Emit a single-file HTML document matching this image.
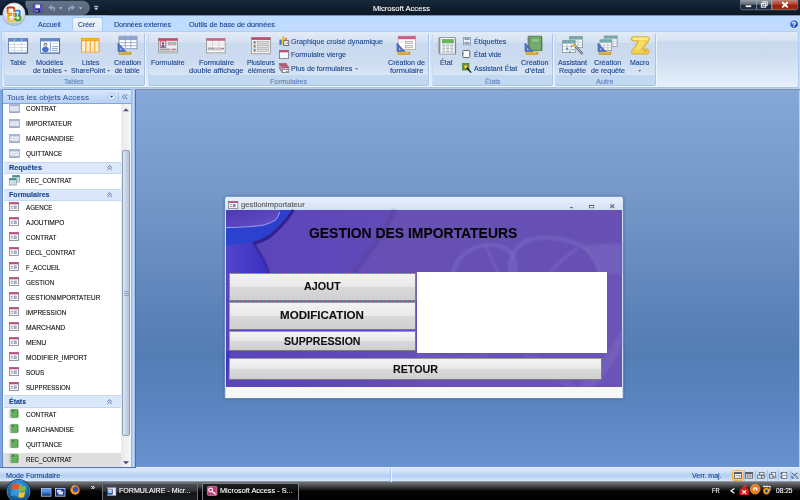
<!DOCTYPE html>
<html><head><meta charset="utf-8"><title>Microsoft Access</title>
<style>
*{margin:0;padding:0;box-sizing:border-box}
html,body{width:800px;height:500px;overflow:hidden;background:#bfdbff;font-family:"Liberation Sans",sans-serif}
.a{position:absolute}
.t{position:absolute;white-space:nowrap;transform-origin:0 50%;display:block;-webkit-text-stroke:0.1px}
svg{position:absolute;overflow:visible}
/* title */
#title{left:0;top:0;width:800px;height:15px;background:linear-gradient(#17293c 0,#11202f 45%,#0c1825 100%)}
#tline{left:0;top:15px;width:800px;height:1px;background:#7f93b0}
#tabs{left:0;top:16px;width:800px;height:16px;background:#bfdbff}
#qat{left:22px;top:1px;width:67px;height:13px;border-radius:0 7px 7px 0;background:linear-gradient(#5d6a80,#47546b)}
#orb{left:3px;top:2px;width:23px;height:23px;border-radius:50%;background:radial-gradient(circle at 50% 35%,#ffffff 0,#f1f3f7 45%,#c9cfdb 80%,#aab2c2 100%);box-shadow:0 0 0 1px rgba(150,160,180,.7),0 1px 2px rgba(0,0,0,.4)}
#tabact{left:72px;top:16.6px;width:30.5px;height:15.4px;border:1px solid #accbf2;border-bottom:none;border-radius:3px 3px 0 0;background:linear-gradient(#eff5fe,#e6eefa 60%,#e0e9f6)}
/* ribbon */
#ribbon{left:1px;top:31px;width:798px;height:57px;border-radius:3px;border:1px solid #b3cef2;border-bottom-color:#a9c4e8;background:linear-gradient(#e1ebf8 0,#d7e3f3 15%,#c9d9ee 17%,#cedcf0 45%,#dae7f6 75%,#e6f1fc 100%)}
.grp{position:absolute;top:33px;height:53px;border:1px solid;border-color:#e3ecf8 #a9c3e6 #a6c1e4 #c9d9ee;border-radius:2px;box-shadow:1px 1px 0 rgba(240,247,255,.9);background:linear-gradient(#dfe9f6 0,#d6e2f3 16%,#c9d9ee 18%,#cedcf0 55%,#d8e5f5 81%,#c2d8f1 81%,#c1d9f2 100%)}
/* gap under ribbon */
#gap{left:0;top:88px;width:800px;height:2px;background:linear-gradient(#c9dcf6,#9db2d2)}
#wstop{left:135px;top:89px;width:665px;height:1px;background:#7b8ca6}
#navtop{left:2.4px;top:89px;width:129px;height:0.9px;background:#6d98d8}
/* nav */
#navl{left:0;top:89.5px;width:3px;height:378.5px;background:linear-gradient(90deg,#84a7da 0,#84a7da 72%,#5f8acb 74%,#5f8acb 100%)}
#navhead{left:3px;top:89.6px;width:128px;height:14.7px;background:linear-gradient(#dce9fb 0,#c9ddf9 45%,#b7d0f4 100%);border-bottom:1px solid #7ea6e2}
#navbody{left:3px;top:104px;width:118px;height:364px;background:#fff}
#navsb{left:121px;top:104px;width:10px;height:364px;background:linear-gradient(90deg,#e9e9e9,#f6f6f6)}
#navthumb{left:122px;top:150px;width:8px;height:286px;border:1px solid #8c9db8;border-radius:2px;background:linear-gradient(90deg,#dfe7f3 0,#c6d3e7 50%,#b4c4de 100%)}
#navr{left:131px;top:90px;width:5px;height:378px;background:linear-gradient(90deg,#8fb3e6 0,#c4daf7 50%,#8fb3e6 80%,#5e6e86 81%,#5e6e86 100%)}
.nh{position:absolute;left:4px;width:117px;height:12px;background:#dbe8fb;border-top:1px solid #c4d8f3;border-bottom:1px solid #c4d8f3}
#navsel{left:3px;top:453px;width:118px;height:14.5px;background:#dedede}
/* workspace */
#ws{left:136px;top:90px;width:664px;height:378px;background:linear-gradient(#86a8d8 0,#7497c8 29%,#6388bd 50%,#537db4 70.5%,#5c86c2 85%,#6993cf 100%)}
#wsr{left:798.6px;top:90px;width:1.4px;height:378px;background:#b9d0f0}
/* dialog */
#dlg{left:224px;top:195.8px;width:399.5px;height:203.2px;border:1px solid #6487b8;border-top-color:#7a9ccc;border-radius:3px 3px 0 0;background:linear-gradient(#e9f0fb 0,#d6e3f6 12px,#cfdef4 13px,#cfdef4 100%);box-shadow:0 0 2px rgba(40,60,100,.5)}
#dlgc{left:226px;top:210px;width:396px;height:177px;background:#6450b6;overflow:hidden}
#dlgb{left:226px;top:387px;width:396px;height:11px;background:#f7f7f7}
.btn{position:absolute;border:1px solid #7b7b7b;border-top-color:#9a9a9a;border-left-color:#9a9a9a;border-radius:1px;background:linear-gradient(#f3f3f3 0,#e9e9e9 48%,#dadada 50%,#cfcfcf 100%)}
#wbox{left:417px;top:272px;width:190px;height:81px;background:#fff}
/* status */
#status{left:0;top:468px;width:800px;height:14px;background:linear-gradient(#c4d8f4 0,#dfeafa 8%,#d3e3f9 22%,#bcd5f5 48%,#b4cef3 62%,#c8dcf7 80%,#d6e5f9 100%);border-bottom:1px solid #8d97a6}
#stl{left:0;top:467.4px;width:135px;height:1px;background:#4f78bc}
#wsb{left:136px;top:466.6px;width:664px;height:1.2px;background:#e9f1fc}
/* taskbar */
#task{left:0;top:482px;width:800px;height:18px;background:linear-gradient(#737577 0,#5b5d60 12%,#3f4144 25%,#1d1e20 40%,#060606 50%,#000 100%)}
#stsep{left:390px;top:469px;width:2px;height:12.5px;background:linear-gradient(90deg,#a9c3e8 0,#a9c3e8 50%,#f0f6fd 50%,#f0f6fd 100%)}
.tb{position:absolute;top:483.4px;height:17px;border-radius:2px 2px 0 0;border:1px solid #6a6f77;border-bottom:none;background:linear-gradient(#4a4d53 0,#303236 45%,#131415 52%,#1b1c1e 100%)}

.tb2{background:linear-gradient(#202124 0,#0b0b0c 45%,#000 55%,#0d0d0f 100%);border-color:#787d86}

</style></head><body>
<div class="a" id="title"></div>
<div class="a" id="tline"></div>
<div class="a" id="tabs"></div>
<div class="a" id="tabact"></div>
<div class="a" id="ribbon"></div>
<div class="grp" style="left:4px;width:141px"></div>
<div class="grp" style="left:148px;width:281px"></div>
<div class="grp" style="left:432px;width:121px"></div>
<div class="grp" style="left:555px;width:101px"></div>
<svg style="left:8px;top:38px" width="20" height="16" viewBox="0 0 20 16" ><rect x="0.5" y="0.5" width="19" height="14.5" fill="#ffffff" stroke="#6f8cc2" stroke-width="1"/><rect x="1" y="1" width="18" height="2.6" fill="#6487c6"/><line x1="1" y1="6.5" x2="19" y2="6.5" stroke="#c5d0e4" stroke-width="0.8"/><line x1="1" y1="9.5" x2="19" y2="9.5" stroke="#c5d0e4" stroke-width="0.8"/><line x1="1" y1="12.5" x2="19" y2="12.5" stroke="#c5d0e4" stroke-width="0.8"/><line x1="6.5" y1="1" x2="6.5" y2="15" stroke="#c5d0e4" stroke-width="0.8"/><line x1="13.5" y1="1" x2="13.5" y2="15" stroke="#c5d0e4" stroke-width="0.8"/><line x1="19.6" y1="1" x2="19.6" y2="15.2" stroke="#4f6796" stroke-width="0.8"/><line x1="1" y1="15.2" x2="19.6" y2="15.2" stroke="#4f6796" stroke-width="0.8"/></svg>
<svg style="left:40px;top:38px" width="20" height="16" viewBox="0 0 20 16" ><rect x="0.5" y="0.5" width="19" height="14.5" fill="#ffffff" stroke="#6f8cc2" stroke-width="1"/><rect x="1" y="1" width="18" height="2.4" fill="#6487c6"/><ellipse cx="5.4" cy="11.4" rx="3.3" ry="2.7" fill="#4a72c4"/><circle cx="5.4" cy="6.8" r="2" fill="#7c7c7c"/><circle cx="5.4" cy="7.2" r="1.1" fill="#d9d9d9"/><line x1="10.4" y1="4.2" x2="10.4" y2="13.6" stroke="#5e7fbd" stroke-width="0.8"/><rect x="12" y="4.8" width="6" height="1.6" fill="#e3e8f2"/><line x1="12" y1="8.6" x2="18" y2="8.6" stroke="#6f8cc2" stroke-width="0.8"/><line x1="12" y1="10.6" x2="18" y2="10.6" stroke="#6f8cc2" stroke-width="0.8"/><line x1="12" y1="12.6" x2="18" y2="12.6" stroke="#6f8cc2" stroke-width="0.8"/><line x1="19.6" y1="1" x2="19.6" y2="15.2" stroke="#4f6796" stroke-width="0.8"/><line x1="1" y1="15.2" x2="19.6" y2="15.2" stroke="#4f6796" stroke-width="0.8"/></svg>
<svg style="left:81px;top:38px" width="19" height="15" viewBox="0 0 19 15" ><rect x="0.4" y="0.4" width="17.6" height="13.6" fill="#fbd596" stroke="#f39a14" stroke-width="0.9"/><rect x="0.4" y="0.4" width="17.6" height="2.6" fill="#f6a21c"/><line x1="0.6" y1="1.5" x2="17.8" y2="1.5" stroke="#fbc566" stroke-width="0.6"/><line x1="2.6" y1="3.2" x2="2.6" y2="13.6" stroke="#fef0d4" stroke-width="2.7"/><line x1="7" y1="3.2" x2="7" y2="13.6" stroke="#fef0d4" stroke-width="2.7"/><line x1="11.5" y1="3.2" x2="11.5" y2="13.6" stroke="#fef0d4" stroke-width="2.7"/><line x1="15.9" y1="3.2" x2="15.9" y2="13.6" stroke="#fef0d4" stroke-width="2.7"/><line x1="4.8" y1="3" x2="4.8" y2="14" stroke="#f6a830" stroke-width="1"/><line x1="9.25" y1="3" x2="9.25" y2="14" stroke="#f6a830" stroke-width="1"/><line x1="13.7" y1="3" x2="13.7" y2="14" stroke="#f6a830" stroke-width="1"/></svg>
<svg style="left:117px;top:35px" width="22" height="21" viewBox="0 0 22 21" ><rect x="2" y="1.2" width="18" height="12.6" fill="#ffffff" stroke="#6e86b3" stroke-width="0.8"/><rect x="2" y="1.2" width="18" height="3.4" fill="#8ea6cf"/><line x1="2" y1="7.666666666666666" x2="20" y2="7.666666666666666" stroke="#7c93bd" stroke-width="0.7"/><line x1="2" y1="10.733333333333333" x2="20" y2="10.733333333333333" stroke="#7c93bd" stroke-width="0.7"/><line x1="2" y1="4.6" x2="20" y2="4.6" stroke="#7c93bd" stroke-width="0.7"/><line x1="8.3" y1="1.2" x2="8.3" y2="13.799999999999999" stroke="#7c93bd" stroke-width="0.7"/><line x1="13.88" y1="1.2" x2="13.88" y2="13.799999999999999" stroke="#7c93bd" stroke-width="0.7"/><path d="M1 8 L9 16.5 L1 16.5 Z" fill="#4d72cc" stroke="#3558b5" stroke-width="0.6" /><path d="M2.8 12.5 L5 15 L2.8 15 Z" fill="#a9c0ee" /><rect x="2" y="17" width="12" height="2.6" fill="#d9aa2c" stroke="#b98b14" stroke-width="0.5"/><line x1="3.5" y1="17.2" x2="3.5" y2="18.4" stroke="#f7e29a" stroke-width="0.6"/><line x1="5.5" y1="17.2" x2="5.5" y2="18.4" stroke="#f7e29a" stroke-width="0.6"/><line x1="7.5" y1="17.2" x2="7.5" y2="18.4" stroke="#f7e29a" stroke-width="0.6"/><line x1="9.5" y1="17.2" x2="9.5" y2="18.4" stroke="#f7e29a" stroke-width="0.6"/><line x1="11.5" y1="17.2" x2="11.5" y2="18.4" stroke="#f7e29a" stroke-width="0.6"/></svg>
<svg style="left:158px;top:38px" width="20" height="15.5" viewBox="0 0 20 15.5" ><rect x="0.5" y="0.5" width="19" height="14.3" fill="#eeeeee" stroke="#9a9a9a" stroke-width="0.9"/><rect x="0.5" y="0.5" width="19" height="2.3" fill="#c4456e"/><rect x="2.2" y="3" width="5.6" height="6.4" fill="#f6f6f6" stroke="#c4456e" stroke-width="0.9"/><circle cx="5" cy="5.4" r="1.2" fill="#555"/><ellipse cx="5" cy="8" rx="1.8" ry="1.3" fill="#3f6fd0"/><rect x="10" y="4.2" width="8" height="2.8" fill="#bdbdbd" stroke="#8c8c8c" stroke-width="0.5"/><rect x="1" y="10.2" width="18" height="4" fill="#d6d6d6"/><line x1="2" y1="11.3" x2="12" y2="11.3" stroke="#777" stroke-width="0.8"/><line x1="14" y1="11.3" x2="18" y2="11.3" stroke="#c4456e" stroke-width="0.8"/><line x1="2" y1="13.2" x2="17" y2="13.2" stroke="#9c9c9c" stroke-width="0.7"/></svg>
<svg style="left:206px;top:38px" width="20" height="15.5" viewBox="0 0 20 15.5" ><rect x="0.5" y="0.5" width="18.6" height="14.3" fill="#ffffff" stroke="#9a9a9a" stroke-width="0.9"/><rect x="0.5" y="0.5" width="18.6" height="2.3" fill="#cf5f84"/><line x1="1" y1="5" x2="19" y2="5" stroke="#c9c9c9" stroke-width="0.7"/><line x1="1" y1="7.2" x2="19" y2="7.2" stroke="#c9c9c9" stroke-width="0.7"/><line x1="6.5" y1="3" x2="6.5" y2="9.2" stroke="#c9c9c9" stroke-width="0.7"/><line x1="12.8" y1="3" x2="12.8" y2="9.2" stroke="#c9c9c9" stroke-width="0.7"/><rect x="1" y="9.2" width="17.8" height="3.4" fill="#dcdcdc"/><line x1="2" y1="10.2" x2="9" y2="10.2" stroke="#777" stroke-width="0.8"/><line x1="10.5" y1="10.2" x2="15" y2="10.2" stroke="#999" stroke-width="0.7"/><line x1="15.5" y1="10.4" x2="18" y2="10.4" stroke="#c4456e" stroke-width="0.9"/><line x1="2" y1="11.8" x2="17" y2="11.8" stroke="#a8a8a8" stroke-width="0.6"/></svg>
<svg style="left:251px;top:36.5px" width="20" height="17.5" viewBox="0 0 20 17.5" ><rect x="0.5" y="0.5" width="19" height="16.2" fill="#f4f4f4" stroke="#9a9a9a" stroke-width="0.9"/><rect x="0.5" y="0.5" width="19" height="2.4" fill="#c4456e"/><circle cx="3.6" cy="5.2" r="1.1" fill="#4b6fb3"/><rect x="2.6" y="5.8" width="2" height="1.2" fill="#e0a030"/><rect x="6.6" y="4.2" width="11" height="2.2" fill="#e2e2e2" stroke="#8f8f8f" stroke-width="0.5"/><line x1="1" y1="7.300000000000001" x2="19" y2="7.300000000000001" stroke="#c4c4c4" stroke-width="0.6"/><circle cx="3.6" cy="9.2" r="1.1" fill="#4b6fb3"/><rect x="2.6" y="9.799999999999999" width="2" height="1.2" fill="#e0a030"/><rect x="6.6" y="8.2" width="11" height="2.2" fill="#e2e2e2" stroke="#8f8f8f" stroke-width="0.5"/><line x1="1" y1="11.299999999999999" x2="19" y2="11.299999999999999" stroke="#c4c4c4" stroke-width="0.6"/><circle cx="3.6" cy="13.2" r="1.1" fill="#4b6fb3"/><rect x="2.6" y="13.799999999999999" width="2" height="1.2" fill="#e0a030"/><rect x="6.6" y="12.2" width="11" height="2.2" fill="#e2e2e2" stroke="#8f8f8f" stroke-width="0.5"/></svg>
<svg style="left:278.6px;top:35.8px" width="10.4" height="10" viewBox="0 0 10.4 10" ><rect x="0.4" y="3.6" width="2.2" height="5.2" fill="#3b74c4"/><rect x="3" y="0.4" width="2.4" height="8.4" fill="#f3bf2e"/><rect x="5.8" y="2" width="2" height="3.4" fill="#e8742a"/><rect x="4.8" y="4.8" width="5" height="4.8" fill="#ffffff" stroke="#4a4f5a" stroke-width="0.8"/><line x1="6" y1="7.6" x2="8.6" y2="7.6" stroke="#7b8290" stroke-width="0.7"/><line x1="8.6" y1="6" x2="8.6" y2="7.6" stroke="#7b8290" stroke-width="0.7"/></svg>
<svg style="left:279px;top:49.8px" width="10" height="9" viewBox="0 0 10 9" ><rect x="0.4" y="0.4" width="9" height="8.2" fill="#f4f7fd" stroke="#6e7684" stroke-width="0.8"/><rect x="0.4" y="0.4" width="9" height="1.9" fill="#c7486f"/></svg>
<svg style="left:279px;top:63px" width="10.4" height="10.4" viewBox="0 0 10.4 10.4" ><rect x="0.4" y="0.4" width="7" height="5.6" fill="#eef1f7" stroke="#767d8a" stroke-width="0.7"/><rect x="0.4" y="0.4" width="7" height="1.6" fill="#c7486f"/><rect x="1.6" y="2.1" width="7" height="5.6" fill="#eef1f7" stroke="#767d8a" stroke-width="0.7"/><rect x="1.6" y="2.1" width="7" height="1.6" fill="#c7486f"/><rect x="2.8" y="3.8" width="7" height="5.6" fill="#eef1f7" stroke="#767d8a" stroke-width="0.7"/><rect x="2.8" y="3.8" width="7" height="1.6" fill="#c7486f"/><rect x="3.4" y="6.6" width="5.6" height="3" fill="#ffffff" stroke="#555c68" stroke-width="0.6"/><path d="M6.6 8 l1.8 0 l-0.9 1.1 Z" fill="#333" /></svg>
<svg style="left:396px;top:35px" width="22" height="21" viewBox="0 0 22 21" ><rect x="2.2" y="1.2" width="17.4" height="13.4" fill="#ffffff" stroke="#a8a8a8" stroke-width="0.8"/><rect x="2.2" y="1.2" width="17.4" height="3" fill="#d25a80"/><rect x="9.6" y="6.4" width="7" height="2.2" fill="#ececec" stroke="#9a9a9a" stroke-width="0.6"/><rect x="9.6" y="10.4" width="7" height="2.4" fill="#ececec" stroke="#9a9a9a" stroke-width="0.6"/><line x1="4" y1="7" x2="8" y2="7" stroke="#cfcfcf" stroke-width="0.7"/><path d="M1 8 L9 16.5 L1 16.5 Z" fill="#4d72cc" stroke="#3558b5" stroke-width="0.6" /><path d="M2.8 12.5 L5 15 L2.8 15 Z" fill="#a9c0ee" /><rect x="2" y="17" width="12" height="2.6" fill="#d9aa2c" stroke="#b98b14" stroke-width="0.5"/><line x1="3.5" y1="17.2" x2="3.5" y2="18.4" stroke="#f7e29a" stroke-width="0.6"/><line x1="5.5" y1="17.2" x2="5.5" y2="18.4" stroke="#f7e29a" stroke-width="0.6"/><line x1="7.5" y1="17.2" x2="7.5" y2="18.4" stroke="#f7e29a" stroke-width="0.6"/><line x1="9.5" y1="17.2" x2="9.5" y2="18.4" stroke="#f7e29a" stroke-width="0.6"/><line x1="11.5" y1="17.2" x2="11.5" y2="18.4" stroke="#f7e29a" stroke-width="0.6"/></svg>
<svg style="left:437.5px;top:37px" width="18.5" height="18" viewBox="0 0 18.5 18" ><rect x="1.6" y="0.5" width="15.6" height="16.6" fill="#fbfbfb" stroke="#8b939d" stroke-width="0.9"/><line x1="17.6" y1="1.2" x2="17.6" y2="17.3" stroke="#6f7780" stroke-width="0.7"/><rect x="4.2" y="2.4" width="11.4" height="3.6" fill="#6fb55c" stroke="#4f9a42" stroke-width="0.5"/><rect x="4.3" y="7.4" width="3" height="2.1" fill="#b4bdc8"/><rect x="8.3" y="7.4" width="3" height="2.1" fill="#b4bdc8"/><rect x="12.3" y="7.4" width="3" height="2.1" fill="#b4bdc8"/><rect x="4.3" y="10.5" width="3" height="2.1" fill="#b4bdc8"/><rect x="8.3" y="10.5" width="3" height="2.1" fill="#b4bdc8"/><rect x="12.3" y="10.5" width="3" height="2.1" fill="#b4bdc8"/><rect x="4.3" y="13.600000000000001" width="3" height="2.1" fill="#b4bdc8"/><rect x="8.3" y="13.600000000000001" width="3" height="2.1" fill="#b4bdc8"/><rect x="12.3" y="13.600000000000001" width="3" height="2.1" fill="#b4bdc8"/><ellipse cx="1.4" cy="2.0" rx="1.3" ry="0.7" fill="none" stroke="#777" stroke-width="0.5"/><ellipse cx="1.4" cy="4.2" rx="1.3" ry="0.7" fill="none" stroke="#777" stroke-width="0.5"/><ellipse cx="1.4" cy="6.4" rx="1.3" ry="0.7" fill="none" stroke="#777" stroke-width="0.5"/><ellipse cx="1.4" cy="8.600000000000001" rx="1.3" ry="0.7" fill="none" stroke="#777" stroke-width="0.5"/><ellipse cx="1.4" cy="10.8" rx="1.3" ry="0.7" fill="none" stroke="#777" stroke-width="0.5"/><ellipse cx="1.4" cy="13.0" rx="1.3" ry="0.7" fill="none" stroke="#777" stroke-width="0.5"/><ellipse cx="1.4" cy="15.200000000000001" rx="1.3" ry="0.7" fill="none" stroke="#777" stroke-width="0.5"/></svg>
<svg style="left:462.9px;top:36.6px" width="8" height="8.4" viewBox="0 0 8 8.4" ><rect x="0.6" y="0.4" width="6.8" height="7.4" fill="#fdfdfd" stroke="#7f8793" stroke-width="0.7"/><rect x="1.4" y="1.2" width="5.2" height="1.6" fill="#7189b8"/><rect x="1.4" y="3.4" width="5.2" height="1.2" fill="#dde2ea"/><rect x="1.4" y="5.2" width="5.2" height="1.6" fill="#7189b8"/></svg>
<svg style="left:462px;top:50.2px" width="8.6" height="8.2" viewBox="0 0 8.6 8.2" ><rect x="0.8" y="0.5" width="7" height="7" fill="#f9fbff" stroke="#4f545c" stroke-width="0.9" rx="1"/><line x1="0.4" y1="3.6" x2="1.6" y2="3.6" stroke="#4f545c" stroke-width="0.8"/></svg>
<svg style="left:462.2px;top:62.8px" width="10" height="10.4" viewBox="0 0 10 10.4" ><rect x="0.4" y="0.4" width="6.6" height="6.6" fill="#58a04a" stroke="#3f7d36" stroke-width="0.7"/><rect x="2" y="2" width="3.4" height="3.4" fill="#e8d23c" stroke="#8a7a10" stroke-width="0.6"/><line x1="4.8" y1="4.8" x2="9.2" y2="9.6" stroke="#111" stroke-width="1.3"/></svg>
<svg style="left:524px;top:35px" width="20" height="21" viewBox="0 0 20 21" ><rect x="4.8" y="1.2" width="12.8" height="14.2" fill="#74ab6e" stroke="#4d7f4a" stroke-width="0.9"/><rect x="7.2" y="3.2" width="8.4" height="4.4" fill="#8fc487" stroke="#5b9455" stroke-width="0.6"/><line x1="17.9" y1="2" x2="17.9" y2="15.6" stroke="#3f6a3c" stroke-width="0.7"/><ellipse cx="4.4" cy="2.6" rx="1.2" ry="0.6" fill="none" stroke="#666" stroke-width="0.5"/><ellipse cx="4.4" cy="4.800000000000001" rx="1.2" ry="0.6" fill="none" stroke="#666" stroke-width="0.5"/><ellipse cx="4.4" cy="7.0" rx="1.2" ry="0.6" fill="none" stroke="#666" stroke-width="0.5"/><ellipse cx="4.4" cy="9.200000000000001" rx="1.2" ry="0.6" fill="none" stroke="#666" stroke-width="0.5"/><ellipse cx="4.4" cy="11.4" rx="1.2" ry="0.6" fill="none" stroke="#666" stroke-width="0.5"/><ellipse cx="4.4" cy="13.6" rx="1.2" ry="0.6" fill="none" stroke="#666" stroke-width="0.5"/><path d="M1 8 L9 16.5 L1 16.5 Z" fill="#4d72cc" stroke="#3558b5" stroke-width="0.6" /><path d="M2.8 12.5 L5 15 L2.8 15 Z" fill="#a9c0ee" /><rect x="2" y="17" width="12" height="2.6" fill="#d9aa2c" stroke="#b98b14" stroke-width="0.5"/><line x1="3.5" y1="17.2" x2="3.5" y2="18.4" stroke="#f7e29a" stroke-width="0.6"/><line x1="5.5" y1="17.2" x2="5.5" y2="18.4" stroke="#f7e29a" stroke-width="0.6"/><line x1="7.5" y1="17.2" x2="7.5" y2="18.4" stroke="#f7e29a" stroke-width="0.6"/><line x1="9.5" y1="17.2" x2="9.5" y2="18.4" stroke="#f7e29a" stroke-width="0.6"/><line x1="11.5" y1="17.2" x2="11.5" y2="18.4" stroke="#f7e29a" stroke-width="0.6"/></svg>
<svg style="left:561.5px;top:35.5px" width="22" height="20" viewBox="0 0 22 20" ><rect x="7.4" y="0.6" width="13" height="11" fill="#ffffff" stroke="#7f95a3" stroke-width="0.8"/><rect x="7.4" y="0.6" width="13" height="2.8" fill="#6aa7a8"/><line x1="7.4" y1="6.133333333333333" x2="20.4" y2="6.133333333333333" stroke="#a9b9c6" stroke-width="0.7"/><line x1="7.4" y1="8.866666666666665" x2="20.4" y2="8.866666666666665" stroke="#a9b9c6" stroke-width="0.7"/><line x1="7.4" y1="3.4" x2="20.4" y2="3.4" stroke="#a9b9c6" stroke-width="0.7"/><line x1="11.82" y1="0.6" x2="11.82" y2="11.6" stroke="#a9b9c6" stroke-width="0.7"/><line x1="16.11" y1="0.6" x2="16.11" y2="11.6" stroke="#a9b9c6" stroke-width="0.7"/><rect x="0.6" y="4.6" width="12.6" height="12" fill="#ffffff" stroke="#7f95a3" stroke-width="0.8"/><rect x="0.6" y="4.6" width="12.6" height="2.8" fill="#6aa7a8"/><line x1="0.6" y1="10.466666666666665" x2="13.2" y2="10.466666666666665" stroke="#a9b9c6" stroke-width="0.7"/><line x1="0.6" y1="13.533333333333331" x2="13.2" y2="13.533333333333331" stroke="#a9b9c6" stroke-width="0.7"/><line x1="0.6" y1="7.3999999999999995" x2="13.2" y2="7.3999999999999995" stroke="#a9b9c6" stroke-width="0.7"/><line x1="4.8839999999999995" y1="4.6" x2="4.8839999999999995" y2="16.6" stroke="#a9b9c6" stroke-width="0.7"/><line x1="9.042" y1="4.6" x2="9.042" y2="16.6" stroke="#a9b9c6" stroke-width="0.7"/><path d="M5.2 11.1 L5.725 12.075 L6.7 12.6 L5.725 13.125 L5.2 14.1 L4.675000000000001 13.125 L3.7 12.6 L4.675000000000001 12.075 Z" fill="#4b7be0" /><path d="M9.6 9.0 L10.02 9.78 L10.799999999999999 10.2 L10.02 10.62 L9.6 11.399999999999999 L9.18 10.62 L8.4 10.2 L9.18 9.78 Z" fill="#4b7be0" /><path d="M7.6 14.5 L7.984999999999999 15.215 L8.7 15.6 L7.984999999999999 15.985 L7.6 16.7 L7.215 15.985 L6.5 15.6 L7.215 15.215 Z" fill="#4b7be0" /><path d="M11.2 13.1 L11.514999999999999 13.685 L12.1 14 L11.514999999999999 14.315 L11.2 14.9 L10.885 14.315 L10.299999999999999 14 L10.885 13.685 Z" fill="#4b7be0" /><line x1="11.6" y1="8.6" x2="20.6" y2="18" stroke="#4a4a4a" stroke-width="2.2"/><line x1="11.6" y1="8.6" x2="20.4" y2="17.8" stroke="#e9e9e9" stroke-width="1"/><line x1="11.2" y1="8.2" x2="13.4" y2="10.5" stroke="#e7b428" stroke-width="2.2"/></svg>
<svg style="left:597px;top:35px" width="22" height="21" viewBox="0 0 22 21" ><rect x="7.2" y="1" width="13" height="10.4" fill="#ffffff" stroke="#7f95a3" stroke-width="0.8"/><rect x="7.2" y="1" width="13" height="2.8" fill="#6aa7a8"/><line x1="7.2" y1="6.333333333333334" x2="20.2" y2="6.333333333333334" stroke="#a9b9c6" stroke-width="0.7"/><line x1="7.2" y1="8.866666666666667" x2="20.2" y2="8.866666666666667" stroke="#a9b9c6" stroke-width="0.7"/><line x1="7.2" y1="3.8" x2="20.2" y2="3.8" stroke="#a9b9c6" stroke-width="0.7"/><line x1="11.620000000000001" y1="1" x2="11.620000000000001" y2="11.4" stroke="#a9b9c6" stroke-width="0.7"/><line x1="15.91" y1="1" x2="15.91" y2="11.4" stroke="#a9b9c6" stroke-width="0.7"/><rect x="3" y="4.8" width="11.6" height="10.6" fill="#ffffff" stroke="#7f95a3" stroke-width="0.8"/><rect x="3" y="4.8" width="11.6" height="2.8" fill="#6aa7a8"/><line x1="3" y1="10.2" x2="14.6" y2="10.2" stroke="#a9b9c6" stroke-width="0.7"/><line x1="3" y1="12.8" x2="14.6" y2="12.8" stroke="#a9b9c6" stroke-width="0.7"/><line x1="3" y1="7.6" x2="14.6" y2="7.6" stroke="#a9b9c6" stroke-width="0.7"/><line x1="6.944" y1="4.8" x2="6.944" y2="15.399999999999999" stroke="#a9b9c6" stroke-width="0.7"/><line x1="10.772" y1="4.8" x2="10.772" y2="15.399999999999999" stroke="#a9b9c6" stroke-width="0.7"/><path d="M1 8 L9 16.5 L1 16.5 Z" fill="#4d72cc" stroke="#3558b5" stroke-width="0.6" /><path d="M2.8 12.5 L5 15 L2.8 15 Z" fill="#a9c0ee" /><rect x="2" y="17" width="12" height="2.6" fill="#d9aa2c" stroke="#b98b14" stroke-width="0.5"/><line x1="3.5" y1="17.2" x2="3.5" y2="18.4" stroke="#f7e29a" stroke-width="0.6"/><line x1="5.5" y1="17.2" x2="5.5" y2="18.4" stroke="#f7e29a" stroke-width="0.6"/><line x1="7.5" y1="17.2" x2="7.5" y2="18.4" stroke="#f7e29a" stroke-width="0.6"/><line x1="9.5" y1="17.2" x2="9.5" y2="18.4" stroke="#f7e29a" stroke-width="0.6"/><line x1="11.5" y1="17.2" x2="11.5" y2="18.4" stroke="#f7e29a" stroke-width="0.6"/></svg>
<svg style="left:629.5px;top:35.6px" width="21" height="19" viewBox="0 0 21 19" ><path d="M3.2 0.8 L16.6 0.8 C20 0.8 20.2 4 18.2 5.2 C16.2 8.4 14.2 10.8 12.4 13.2 L17 13.2 C19.8 13.2 20 17.8 16.8 18 L4 18 C0.6 18 0.6 14.8 2.6 13.6 C5 11 6.8 8.2 7.8 5 L3.2 5 C0.4 5 0.4 0.8 3.2 0.8 Z" fill="#f2d04c" stroke="#c7a028" stroke-width="0.8" /><path d="M4 1.6 L16.2 1.6 C18 1.8 18.2 3.2 17.4 3.9 L4 3.9 C2.4 3.7 2.4 1.8 4 1.6 Z" fill="#fbeb96" /><path d="M9 5.2 C8.2 8.6 6.4 11.4 4 13.8 L9.4 14 C11.6 11.4 13.4 8.8 15.6 5.2 Z" fill="#f7de6a" /><path d="M14.6 13.6 C13.2 14.2 13.2 16 14.8 16.2 L16.6 16.2 C17.8 15.8 17.8 14 16.8 13.8 Z" fill="#dcb536" /></svg>
<svg style="left:63.9px;top:70.0px" width="3.2" height="1.8" viewBox="0 0 3.2 1.8" ><path d="M0 0 L3.2 0 L1.6 1.7 Z" fill="#5a72a2" /></svg><svg style="left:106.9px;top:70.0px" width="3.2" height="1.8" viewBox="0 0 3.2 1.8" ><path d="M0 0 L3.2 0 L1.6 1.7 Z" fill="#5a72a2" /></svg><svg style="left:354.7px;top:67.60000000000001px" width="3.2" height="1.8" viewBox="0 0 3.2 1.8" ><path d="M0 0 L3.2 0 L1.6 1.7 Z" fill="#5a72a2" /></svg><svg style="left:637.6999999999999px;top:69.8px" width="3.2" height="1.8" viewBox="0 0 3.2 1.8" ><path d="M0 0 L3.2 0 L1.6 1.7 Z" fill="#5a72a2" /></svg>
<svg style="left:0px;top:0px" width="110" height="30" viewBox="0 0 110 30" ><defs><radialGradient id="og" cx="50%" cy="30%" r="75%"><stop offset="0" stop-color="#ffffff"/><stop offset="0.45" stop-color="#eceff5"/><stop offset="0.8" stop-color="#c8cfdc"/><stop offset="1" stop-color="#a4adbf"/></radialGradient><linearGradient id="lr" x1="0" y1="0" x2="0" y2="1"><stop offset="0" stop-color="#cf3510"/><stop offset="1" stop-color="#ee9412"/></linearGradient><linearGradient id="ly" x1="0" y1="0" x2="0" y2="1"><stop offset="0" stop-color="#f29a10"/><stop offset="1" stop-color="#f3c437"/></linearGradient><linearGradient id="qg" x1="0" y1="0" x2="0" y2="1"><stop offset="0" stop-color="#64728a"/><stop offset="1" stop-color="#56647a"/></linearGradient></defs><path d="M26 1.2 L82.5 1.2 C91.5 1.2 91.5 14.4 82.5 14.4 L26 14.4 Z" fill="url(#qg)" stroke="#7e8a9c" stroke-width="0.6" /><circle cx="14" cy="14" r="14.2" fill="#111d30"/><rect x="0" y="15" width="40" height="15" fill="#bfdbff"/><line x1="0" y1="15.5" x2="110" y2="15.5" stroke="#93a4be" stroke-width="1"/><circle cx="14" cy="14.3" r="11.6" fill="#7f8ea6" opacity="0.55"/><circle cx="14" cy="14" r="11" fill="url(#og)" stroke="#c2c9d6" stroke-width="0.6"/><rect x="7.6" y="7.4" width="6.6" height="6.4" fill="none" stroke="url(#lr)" stroke-width="2" rx="1.2"/><rect x="8.2" y="15" width="6" height="5.8" fill="none" stroke="url(#ly)" stroke-width="2" rx="1.2"/><rect x="15.6" y="10.6" width="4.2" height="3.8" fill="none" stroke="#2d82d8" stroke-width="1.8" rx="1"/><rect x="15.6" y="15.8" width="4.8" height="4.4" fill="none" stroke="#4ba324" stroke-width="1.9" rx="1"/><rect x="12.4" y="12.4" width="5" height="5" fill="none" stroke="#ffffff" stroke-width="0.9" rx="0.5" opacity="0.85"/><rect x="33.2" y="4.2" width="8.6" height="8.2" fill="#5b51cb" stroke="#3f36a0" stroke-width="0.6" rx="0.6"/><rect x="35.4" y="4.6" width="4.6" height="3.4" fill="#f3f3fb"/><rect x="35.8" y="9.4" width="4" height="3" fill="#23233a"/><rect x="36.4" y="10" width="1.2" height="1.8" fill="#d8d8e8"/><path d="M48.2 7.6 L51.6 4.4 L51.6 6.4 C56 6.2 56.6 10.4 52.6 11.8 C54.6 9.8 54 8.4 51.6 8.6 L51.6 10.4 Z" fill="#8ea3c6" /><path d="M59 7.2 L62.2 7.2 L60.6 9.6 Z" fill="#c9c2b8" /><path d="M75 7.6 L71.6 4.4 L71.6 6.4 C67.2 6.2 66.6 10.4 70.6 11.8 C68.6 9.8 69.2 8.4 71.6 8.6 L71.6 10.4 Z" fill="#8ea3c6" /><path d="M79 7.2 L82.2 7.2 L80.6 9.6 Z" fill="#c9c2b8" /><line x1="94.2" y1="6.3" x2="98.2" y2="6.3" stroke="#e8eefc" stroke-width="0.9"/><path d="M94.2 7.8 L98.2 7.8 L96.2 10.2 Z" fill="#dfe8ff" stroke="#4a6fd0" stroke-width="0.4" /></svg>
<svg style="left:740px;top:0px" width="60" height="11" viewBox="0 0 60 11" ><defs><linearGradient id="wg" x1="0" y1="0" x2="0" y2="1"><stop offset="0" stop-color="#98a1ab"/><stop offset="0.45" stop-color="#5b6673"/><stop offset="0.5" stop-color="#1a273c"/><stop offset="1" stop-color="#1f2d44"/></linearGradient><linearGradient id="cg" x1="0" y1="0" x2="0" y2="1"><stop offset="0" stop-color="#cc7f6e"/><stop offset="0.45" stop-color="#b0402b"/><stop offset="0.5" stop-color="#98200a"/><stop offset="1" stop-color="#a82e14"/></linearGradient></defs><path d="M0.4 0 L0.4 7.6 C0.4 9.2 1.4 9.8 2.6 9.8 L32 9.8 L32 0 Z" fill="url(#wg)" stroke="#8d96a2" stroke-width="0.6" /><path d="M32 0 L32 9.8 L55.4 9.8 C57 9.8 57.8 9 57.8 7.6 L57.8 0 Z" fill="url(#cg)" stroke="#8d96a2" stroke-width="0.6" /><line x1="16.6" y1="0" x2="16.6" y2="9.6" stroke="#aab2bc" stroke-width="0.7"/><line x1="31.8" y1="0" x2="31.8" y2="9.6" stroke="#aab2bc" stroke-width="0.7"/><rect x="5.6" y="5.2" width="5.6" height="1.9" fill="#ffffff" stroke="#4a4a4a" stroke-width="0.3"/><rect x="21.4" y="3.4" width="4.2" height="3.8" fill="none" stroke="#f4f4f4" stroke-width="1.1"/><rect x="23" y="1.8" width="4.2" height="3.8" fill="none" stroke="#f4f4f4" stroke-width="0.9"/><path d="M42.2 2.2 L47.8 7.4 M47.8 2.2 L42.2 7.4" fill="none" stroke="#ffffff" stroke-width="1.9" /></svg>
<svg style="left:789px;top:18.5px" width="10" height="10" viewBox="0 0 10 10" ><defs><radialGradient id="hg" cx="40%" cy="30%" r="70%"><stop offset="0" stop-color="#7fb0ff"/><stop offset="0.6" stop-color="#1f55d8"/><stop offset="1" stop-color="#0c2fa0"/></radialGradient></defs><circle cx="5" cy="5" r="4.3" fill="url(#hg)" stroke="#dfe9fb" stroke-width="0.9"/><text x="5" y="7.6" font-family="Liberation Sans" font-weight="bold" font-size="7" fill="#fff" text-anchor="middle">?</text></svg>
<div class="a" id="gap"></div>
<div class="a" id="navl"></div>
<div class="a" id="navhead"></div>
<div class="a" id="navbody"></div>
<div class="a" id="navsb"></div>
<div class="a" id="navthumb"></div>
<div class="a" id="navr"></div>
<div class="nh" style="top:162px;height:12px"></div>
<div class="nh" style="top:188.6px;height:12.4px"></div>
<div class="nh" style="top:395px;height:13px"></div>
<div class="a" id="navsel"></div>
<svg style="left:9.2px;top:103.7px" width="11" height="9" viewBox="0 0 11 9" ><rect x="0.4" y="0.4" width="10" height="7.6" fill="#d0d6e5" stroke="#98a4bf" stroke-width="0.7"/><rect x="0.4" y="0.4" width="10" height="1.7" fill="#a3b6da"/><line x1="0.8" y1="3.4" x2="10" y2="3.4" stroke="#f2f5fb" stroke-width="0.8"/><line x1="0.8" y1="5.6" x2="10" y2="5.6" stroke="#f2f5fb" stroke-width="0.8"/><line x1="3.8" y1="2.2" x2="3.8" y2="7.8" stroke="#e6ebf5" stroke-width="0.6"/><line x1="7.2" y1="2.2" x2="7.2" y2="7.8" stroke="#e6ebf5" stroke-width="0.6"/><line x1="0.6" y1="8.3" x2="10.6" y2="8.3" stroke="#6d7a98" stroke-width="0.7"/></svg>
<svg style="left:9.2px;top:118.7px" width="11" height="9" viewBox="0 0 11 9" ><rect x="0.4" y="0.4" width="10" height="7.6" fill="#d0d6e5" stroke="#98a4bf" stroke-width="0.7"/><rect x="0.4" y="0.4" width="10" height="1.7" fill="#a3b6da"/><line x1="0.8" y1="3.4" x2="10" y2="3.4" stroke="#f2f5fb" stroke-width="0.8"/><line x1="0.8" y1="5.6" x2="10" y2="5.6" stroke="#f2f5fb" stroke-width="0.8"/><line x1="3.8" y1="2.2" x2="3.8" y2="7.8" stroke="#e6ebf5" stroke-width="0.6"/><line x1="7.2" y1="2.2" x2="7.2" y2="7.8" stroke="#e6ebf5" stroke-width="0.6"/><line x1="0.6" y1="8.3" x2="10.6" y2="8.3" stroke="#6d7a98" stroke-width="0.7"/></svg>
<svg style="left:9.2px;top:133.7px" width="11" height="9" viewBox="0 0 11 9" ><rect x="0.4" y="0.4" width="10" height="7.6" fill="#d0d6e5" stroke="#98a4bf" stroke-width="0.7"/><rect x="0.4" y="0.4" width="10" height="1.7" fill="#a3b6da"/><line x1="0.8" y1="3.4" x2="10" y2="3.4" stroke="#f2f5fb" stroke-width="0.8"/><line x1="0.8" y1="5.6" x2="10" y2="5.6" stroke="#f2f5fb" stroke-width="0.8"/><line x1="3.8" y1="2.2" x2="3.8" y2="7.8" stroke="#e6ebf5" stroke-width="0.6"/><line x1="7.2" y1="2.2" x2="7.2" y2="7.8" stroke="#e6ebf5" stroke-width="0.6"/><line x1="0.6" y1="8.3" x2="10.6" y2="8.3" stroke="#6d7a98" stroke-width="0.7"/></svg>
<svg style="left:9.2px;top:148.7px" width="11" height="9" viewBox="0 0 11 9" ><rect x="0.4" y="0.4" width="10" height="7.6" fill="#d0d6e5" stroke="#98a4bf" stroke-width="0.7"/><rect x="0.4" y="0.4" width="10" height="1.7" fill="#a3b6da"/><line x1="0.8" y1="3.4" x2="10" y2="3.4" stroke="#f2f5fb" stroke-width="0.8"/><line x1="0.8" y1="5.6" x2="10" y2="5.6" stroke="#f2f5fb" stroke-width="0.8"/><line x1="3.8" y1="2.2" x2="3.8" y2="7.8" stroke="#e6ebf5" stroke-width="0.6"/><line x1="7.2" y1="2.2" x2="7.2" y2="7.8" stroke="#e6ebf5" stroke-width="0.6"/><line x1="0.6" y1="8.3" x2="10.6" y2="8.3" stroke="#6d7a98" stroke-width="0.7"/></svg>
<svg style="left:9.2px;top:175.0px" width="11" height="10.4" viewBox="0 0 11 10.4" ><rect x="3.7" y="0.4" width="6.8" height="6.6" fill="#eef4fb" stroke="#5f8f98" stroke-width="0.7"/><rect x="3.7" y="0.4" width="6.8" height="1.9" fill="#3f9090"/><line x1="6.1" y1="2.4" x2="6.1" y2="6.800000000000001" stroke="#9cb4c4" stroke-width="0.5"/><line x1="8.3" y1="2.4" x2="8.3" y2="6.800000000000001" stroke="#9cb4c4" stroke-width="0.5"/><line x1="3.7" y1="4.7" x2="10.5" y2="4.7" stroke="#9cb4c4" stroke-width="0.5"/><rect x="0.4" y="3.4" width="6.8" height="6.6" fill="#eef4fb" stroke="#5f8f98" stroke-width="0.7"/><rect x="0.4" y="3.4" width="6.8" height="1.9" fill="#3f9090"/><line x1="2.8" y1="5.4" x2="2.8" y2="9.8" stroke="#9cb4c4" stroke-width="0.5"/><line x1="5.0" y1="5.4" x2="5.0" y2="9.8" stroke="#9cb4c4" stroke-width="0.5"/><line x1="0.4" y1="7.699999999999999" x2="7.2" y2="7.699999999999999" stroke="#9cb4c4" stroke-width="0.5"/></svg>
<svg style="left:9.3px;top:202.0px" width="10" height="9" viewBox="0 0 10 9" ><rect x="0.4" y="0.4" width="9.2" height="8.2" fill="#fbfbfd" stroke="#7a8290" stroke-width="0.8"/><rect x="0.4" y="0.4" width="9.2" height="1.9" fill="#c24b72"/><line x1="1.8" y1="4.4" x2="3.8" y2="4.4" stroke="#6d7584" stroke-width="0.8"/><line x1="1.8" y1="6.2" x2="3.8" y2="6.2" stroke="#6d7584" stroke-width="0.8"/><rect x="4.8" y="3.6" width="2.8" height="3.4" fill="#7f8fb4"/><line x1="6.2" y1="3.6" x2="6.2" y2="7" stroke="#e9edf6" stroke-width="0.6"/></svg>
<svg style="left:9.3px;top:217.0px" width="10" height="9" viewBox="0 0 10 9" ><rect x="0.4" y="0.4" width="9.2" height="8.2" fill="#fbfbfd" stroke="#7a8290" stroke-width="0.8"/><rect x="0.4" y="0.4" width="9.2" height="1.9" fill="#c24b72"/><line x1="1.8" y1="4.4" x2="3.8" y2="4.4" stroke="#6d7584" stroke-width="0.8"/><line x1="1.8" y1="6.2" x2="3.8" y2="6.2" stroke="#6d7584" stroke-width="0.8"/><rect x="4.8" y="3.6" width="2.8" height="3.4" fill="#7f8fb4"/><line x1="6.2" y1="3.6" x2="6.2" y2="7" stroke="#e9edf6" stroke-width="0.6"/></svg>
<svg style="left:9.3px;top:232.0px" width="10" height="9" viewBox="0 0 10 9" ><rect x="0.4" y="0.4" width="9.2" height="8.2" fill="#fbfbfd" stroke="#7a8290" stroke-width="0.8"/><rect x="0.4" y="0.4" width="9.2" height="1.9" fill="#c24b72"/><line x1="1.8" y1="4.4" x2="3.8" y2="4.4" stroke="#6d7584" stroke-width="0.8"/><line x1="1.8" y1="6.2" x2="3.8" y2="6.2" stroke="#6d7584" stroke-width="0.8"/><rect x="4.8" y="3.6" width="2.8" height="3.4" fill="#7f8fb4"/><line x1="6.2" y1="3.6" x2="6.2" y2="7" stroke="#e9edf6" stroke-width="0.6"/></svg>
<svg style="left:9.3px;top:247.0px" width="10" height="9" viewBox="0 0 10 9" ><rect x="0.4" y="0.4" width="9.2" height="8.2" fill="#fbfbfd" stroke="#7a8290" stroke-width="0.8"/><rect x="0.4" y="0.4" width="9.2" height="1.9" fill="#c24b72"/><line x1="1.8" y1="4.4" x2="3.8" y2="4.4" stroke="#6d7584" stroke-width="0.8"/><line x1="1.8" y1="6.2" x2="3.8" y2="6.2" stroke="#6d7584" stroke-width="0.8"/><rect x="4.8" y="3.6" width="2.8" height="3.4" fill="#7f8fb4"/><line x1="6.2" y1="3.6" x2="6.2" y2="7" stroke="#e9edf6" stroke-width="0.6"/></svg>
<svg style="left:9.3px;top:262.0px" width="10" height="9" viewBox="0 0 10 9" ><rect x="0.4" y="0.4" width="9.2" height="8.2" fill="#fbfbfd" stroke="#7a8290" stroke-width="0.8"/><rect x="0.4" y="0.4" width="9.2" height="1.9" fill="#c24b72"/><line x1="1.8" y1="4.4" x2="3.8" y2="4.4" stroke="#6d7584" stroke-width="0.8"/><line x1="1.8" y1="6.2" x2="3.8" y2="6.2" stroke="#6d7584" stroke-width="0.8"/><rect x="4.8" y="3.6" width="2.8" height="3.4" fill="#7f8fb4"/><line x1="6.2" y1="3.6" x2="6.2" y2="7" stroke="#e9edf6" stroke-width="0.6"/></svg>
<svg style="left:9.3px;top:277.0px" width="10" height="9" viewBox="0 0 10 9" ><rect x="0.4" y="0.4" width="9.2" height="8.2" fill="#fbfbfd" stroke="#7a8290" stroke-width="0.8"/><rect x="0.4" y="0.4" width="9.2" height="1.9" fill="#c24b72"/><line x1="1.8" y1="4.4" x2="3.8" y2="4.4" stroke="#6d7584" stroke-width="0.8"/><line x1="1.8" y1="6.2" x2="3.8" y2="6.2" stroke="#6d7584" stroke-width="0.8"/><rect x="4.8" y="3.6" width="2.8" height="3.4" fill="#7f8fb4"/><line x1="6.2" y1="3.6" x2="6.2" y2="7" stroke="#e9edf6" stroke-width="0.6"/></svg>
<svg style="left:9.3px;top:292.0px" width="10" height="9" viewBox="0 0 10 9" ><rect x="0.4" y="0.4" width="9.2" height="8.2" fill="#fbfbfd" stroke="#7a8290" stroke-width="0.8"/><rect x="0.4" y="0.4" width="9.2" height="1.9" fill="#c24b72"/><line x1="1.8" y1="4.4" x2="3.8" y2="4.4" stroke="#6d7584" stroke-width="0.8"/><line x1="1.8" y1="6.2" x2="3.8" y2="6.2" stroke="#6d7584" stroke-width="0.8"/><rect x="4.8" y="3.6" width="2.8" height="3.4" fill="#7f8fb4"/><line x1="6.2" y1="3.6" x2="6.2" y2="7" stroke="#e9edf6" stroke-width="0.6"/></svg>
<svg style="left:9.3px;top:307.0px" width="10" height="9" viewBox="0 0 10 9" ><rect x="0.4" y="0.4" width="9.2" height="8.2" fill="#fbfbfd" stroke="#7a8290" stroke-width="0.8"/><rect x="0.4" y="0.4" width="9.2" height="1.9" fill="#c24b72"/><line x1="1.8" y1="4.4" x2="3.8" y2="4.4" stroke="#6d7584" stroke-width="0.8"/><line x1="1.8" y1="6.2" x2="3.8" y2="6.2" stroke="#6d7584" stroke-width="0.8"/><rect x="4.8" y="3.6" width="2.8" height="3.4" fill="#7f8fb4"/><line x1="6.2" y1="3.6" x2="6.2" y2="7" stroke="#e9edf6" stroke-width="0.6"/></svg>
<svg style="left:9.3px;top:322.0px" width="10" height="9" viewBox="0 0 10 9" ><rect x="0.4" y="0.4" width="9.2" height="8.2" fill="#fbfbfd" stroke="#7a8290" stroke-width="0.8"/><rect x="0.4" y="0.4" width="9.2" height="1.9" fill="#c24b72"/><line x1="1.8" y1="4.4" x2="3.8" y2="4.4" stroke="#6d7584" stroke-width="0.8"/><line x1="1.8" y1="6.2" x2="3.8" y2="6.2" stroke="#6d7584" stroke-width="0.8"/><rect x="4.8" y="3.6" width="2.8" height="3.4" fill="#7f8fb4"/><line x1="6.2" y1="3.6" x2="6.2" y2="7" stroke="#e9edf6" stroke-width="0.6"/></svg>
<svg style="left:9.3px;top:337.0px" width="10" height="9" viewBox="0 0 10 9" ><rect x="0.4" y="0.4" width="9.2" height="8.2" fill="#fbfbfd" stroke="#7a8290" stroke-width="0.8"/><rect x="0.4" y="0.4" width="9.2" height="1.9" fill="#c24b72"/><line x1="1.8" y1="4.4" x2="3.8" y2="4.4" stroke="#6d7584" stroke-width="0.8"/><line x1="1.8" y1="6.2" x2="3.8" y2="6.2" stroke="#6d7584" stroke-width="0.8"/><rect x="4.8" y="3.6" width="2.8" height="3.4" fill="#7f8fb4"/><line x1="6.2" y1="3.6" x2="6.2" y2="7" stroke="#e9edf6" stroke-width="0.6"/></svg>
<svg style="left:9.3px;top:352.0px" width="10" height="9" viewBox="0 0 10 9" ><rect x="0.4" y="0.4" width="9.2" height="8.2" fill="#fbfbfd" stroke="#7a8290" stroke-width="0.8"/><rect x="0.4" y="0.4" width="9.2" height="1.9" fill="#c24b72"/><line x1="1.8" y1="4.4" x2="3.8" y2="4.4" stroke="#6d7584" stroke-width="0.8"/><line x1="1.8" y1="6.2" x2="3.8" y2="6.2" stroke="#6d7584" stroke-width="0.8"/><rect x="4.8" y="3.6" width="2.8" height="3.4" fill="#7f8fb4"/><line x1="6.2" y1="3.6" x2="6.2" y2="7" stroke="#e9edf6" stroke-width="0.6"/></svg>
<svg style="left:9.3px;top:367.0px" width="10" height="9" viewBox="0 0 10 9" ><rect x="0.4" y="0.4" width="9.2" height="8.2" fill="#fbfbfd" stroke="#7a8290" stroke-width="0.8"/><rect x="0.4" y="0.4" width="9.2" height="1.9" fill="#c24b72"/><line x1="1.8" y1="4.4" x2="3.8" y2="4.4" stroke="#6d7584" stroke-width="0.8"/><line x1="1.8" y1="6.2" x2="3.8" y2="6.2" stroke="#6d7584" stroke-width="0.8"/><rect x="4.8" y="3.6" width="2.8" height="3.4" fill="#7f8fb4"/><line x1="6.2" y1="3.6" x2="6.2" y2="7" stroke="#e9edf6" stroke-width="0.6"/></svg>
<svg style="left:9.3px;top:382.0px" width="10" height="9" viewBox="0 0 10 9" ><rect x="0.4" y="0.4" width="9.2" height="8.2" fill="#fbfbfd" stroke="#7a8290" stroke-width="0.8"/><rect x="0.4" y="0.4" width="9.2" height="1.9" fill="#c24b72"/><line x1="1.8" y1="4.4" x2="3.8" y2="4.4" stroke="#6d7584" stroke-width="0.8"/><line x1="1.8" y1="6.2" x2="3.8" y2="6.2" stroke="#6d7584" stroke-width="0.8"/><rect x="4.8" y="3.6" width="2.8" height="3.4" fill="#7f8fb4"/><line x1="6.2" y1="3.6" x2="6.2" y2="7" stroke="#e9edf6" stroke-width="0.6"/></svg>
<svg style="left:9px;top:409.0px" width="10" height="9" viewBox="0 0 10 9" ><rect x="1.6" y="0.4" width="7.2" height="8.2" fill="#62b25c" stroke="#4a8e46" stroke-width="0.7" rx="0.6"/><rect x="2.6" y="1.2" width="2.6" height="1.4" fill="#2f7a34"/><line x1="8.9" y1="1" x2="8.9" y2="8.4" stroke="#3c7a3a" stroke-width="0.7"/><ellipse cx="1.3" cy="1.6" rx="1.1" ry="0.6" fill="#fff" stroke="#8a8a8a" stroke-width="0.4"/><ellipse cx="1.3" cy="3.6" rx="1.1" ry="0.6" fill="#fff" stroke="#8a8a8a" stroke-width="0.4"/><ellipse cx="1.3" cy="5.6" rx="1.1" ry="0.6" fill="#fff" stroke="#8a8a8a" stroke-width="0.4"/><ellipse cx="1.3" cy="7.6" rx="1.1" ry="0.6" fill="#fff" stroke="#8a8a8a" stroke-width="0.4"/></svg>
<svg style="left:9px;top:424.0px" width="10" height="9" viewBox="0 0 10 9" ><rect x="1.6" y="0.4" width="7.2" height="8.2" fill="#62b25c" stroke="#4a8e46" stroke-width="0.7" rx="0.6"/><rect x="2.6" y="1.2" width="2.6" height="1.4" fill="#2f7a34"/><line x1="8.9" y1="1" x2="8.9" y2="8.4" stroke="#3c7a3a" stroke-width="0.7"/><ellipse cx="1.3" cy="1.6" rx="1.1" ry="0.6" fill="#fff" stroke="#8a8a8a" stroke-width="0.4"/><ellipse cx="1.3" cy="3.6" rx="1.1" ry="0.6" fill="#fff" stroke="#8a8a8a" stroke-width="0.4"/><ellipse cx="1.3" cy="5.6" rx="1.1" ry="0.6" fill="#fff" stroke="#8a8a8a" stroke-width="0.4"/><ellipse cx="1.3" cy="7.6" rx="1.1" ry="0.6" fill="#fff" stroke="#8a8a8a" stroke-width="0.4"/></svg>
<svg style="left:9px;top:439.0px" width="10" height="9" viewBox="0 0 10 9" ><rect x="1.6" y="0.4" width="7.2" height="8.2" fill="#62b25c" stroke="#4a8e46" stroke-width="0.7" rx="0.6"/><rect x="2.6" y="1.2" width="2.6" height="1.4" fill="#2f7a34"/><line x1="8.9" y1="1" x2="8.9" y2="8.4" stroke="#3c7a3a" stroke-width="0.7"/><ellipse cx="1.3" cy="1.6" rx="1.1" ry="0.6" fill="#fff" stroke="#8a8a8a" stroke-width="0.4"/><ellipse cx="1.3" cy="3.6" rx="1.1" ry="0.6" fill="#fff" stroke="#8a8a8a" stroke-width="0.4"/><ellipse cx="1.3" cy="5.6" rx="1.1" ry="0.6" fill="#fff" stroke="#8a8a8a" stroke-width="0.4"/><ellipse cx="1.3" cy="7.6" rx="1.1" ry="0.6" fill="#fff" stroke="#8a8a8a" stroke-width="0.4"/></svg>
<svg style="left:9px;top:454.0px" width="10" height="9" viewBox="0 0 10 9" ><rect x="1.6" y="0.4" width="7.2" height="8.2" fill="#62b25c" stroke="#4a8e46" stroke-width="0.7" rx="0.6"/><rect x="2.6" y="1.2" width="2.6" height="1.4" fill="#2f7a34"/><line x1="8.9" y1="1" x2="8.9" y2="8.4" stroke="#3c7a3a" stroke-width="0.7"/><ellipse cx="1.3" cy="1.6" rx="1.1" ry="0.6" fill="#fff" stroke="#8a8a8a" stroke-width="0.4"/><ellipse cx="1.3" cy="3.6" rx="1.1" ry="0.6" fill="#fff" stroke="#8a8a8a" stroke-width="0.4"/><ellipse cx="1.3" cy="5.6" rx="1.1" ry="0.6" fill="#fff" stroke="#8a8a8a" stroke-width="0.4"/><ellipse cx="1.3" cy="7.6" rx="1.1" ry="0.6" fill="#fff" stroke="#8a8a8a" stroke-width="0.4"/></svg>
<svg style="left:107.4px;top:165.2px" width="5.2" height="5.6" viewBox="0 0 5.2 5.6" ><path d="M0.4 2.6 L2.6 0.6 L4.8 2.6 M0.4 5 L2.6 3 L4.8 5" fill="none" stroke="#3b5a9a" stroke-width="0.8" /></svg>
<svg style="left:107.4px;top:192.0px" width="5.2" height="5.6" viewBox="0 0 5.2 5.6" ><path d="M0.4 2.6 L2.6 0.6 L4.8 2.6 M0.4 5 L2.6 3 L4.8 5" fill="none" stroke="#3b5a9a" stroke-width="0.8" /></svg>
<svg style="left:107.4px;top:398.8px" width="5.2" height="5.6" viewBox="0 0 5.2 5.6" ><path d="M0.4 2.6 L2.6 0.6 L4.8 2.6 M0.4 5 L2.6 3 L4.8 5" fill="none" stroke="#3b5a9a" stroke-width="0.8" /></svg>
<svg style="left:107.2px;top:92.3px" width="9.2" height="9.2" viewBox="0 0 9.2 9.2" ><circle cx="4.6" cy="4.6" r="3.5" fill="#e9f1fc" stroke="#93abd6" stroke-width="0.6"/><path d="M2.8 3.8 L6.4 3.8 L4.6 6 Z" fill="#2f4f8f" /></svg>
<svg style="left:117.6px;top:91.5px" width="1" height="11" viewBox="0 0 1 11" ><line x1="0.5" y1="0" x2="0.5" y2="11" stroke="#a4c0e8" stroke-width="0.8"/></svg>
<svg style="left:121.6px;top:94.2px" width="6" height="6" viewBox="0 0 6 6" ><path d="M2.6 0.4 L0.6 2.8 L2.6 5.2 M5.2 0.4 L3.2 2.8 L5.2 5.2" fill="none" stroke="#3b5a9a" stroke-width="0.8" /></svg>
<svg style="left:123px;top:107.5px" width="6" height="3.4" viewBox="0 0 6 3.4" ><path d="M0 3.2 L3 0.2 L6 3.2 Z" fill="#4a5a78" /></svg>
<svg style="left:123px;top:460.8px" width="6" height="3.4" viewBox="0 0 6 3.4" ><path d="M0 0.2 L6 0.2 L3 3.2 Z" fill="#3a4a70" /></svg>
<svg style="left:123.6px;top:291px" width="5" height="5" viewBox="0 0 5 5" ><line x1="0" y1="0.5" x2="5" y2="0.5" stroke="#7d8eaa" stroke-width="0.7"/><line x1="0" y1="2.5" x2="5" y2="2.5" stroke="#7d8eaa" stroke-width="0.7"/><line x1="0" y1="4.5" x2="5" y2="4.5" stroke="#7d8eaa" stroke-width="0.7"/></svg>
<div class="a" id="ws"></div>
<div class="a" id="wsr"></div>
<div class="a" id="wstop"></div>
<div class="a" id="navtop"></div>
<div class="a" id="dlg"></div>
<svg style="left:226px;top:210px" width="396" height="177" viewBox="0 0 396 177" ><defs><linearGradient id="pb" x1="0" y1="0" x2="1" y2="0"><stop offset="0" stop-color="#5a44bb"/><stop offset="0.35" stop-color="#6049b9"/><stop offset="0.5" stop-color="#664fb5"/><stop offset="1" stop-color="#6a54b6"/></linearGradient><linearGradient id="bl" x1="0" y1="0" x2="1" y2="0"><stop offset="0" stop-color="#2a44d0"/><stop offset="1" stop-color="#2d3ecb"/></linearGradient></defs><rect x="0" y="0" width="396" height="177" fill="url(#pb)"/><path d="M164.5 0 Q 150 30 122.5 64 L 396 64 L396 0 Z" fill="#6750b4" opacity="0.85"/><filter id="bl2" x="-20%" y="-20%" width="140%" height="140%"><feGaussianBlur stdDeviation="1.6"/></filter><path d="M168.5 0 Q 154 30 126.5 64" fill="none" stroke="#4a3696" stroke-width="5" opacity="0.42" filter="url(#bl2)"/><filter id="bl1" x="-10%" y="-10%" width="120%" height="120%"><feGaussianBlur stdDeviation="0.9"/></filter><g filter="url(#bl1)"><path d="M227 64 C 230 44 250 33 270 35.5 C 280 37 286 42 288 48 C 290 54 289 60 288 64" fill="none" stroke="#7f6dc6" stroke-width="4" stroke-opacity="0.5"/><path d="M284 64 C 283 50 288 38 300 31 C 315 25 340 27 357 37 C 366 43 372 54 374 64" fill="none" stroke="#7f6dc6" stroke-width="4.2" stroke-opacity="0.5"/><path d="M259 35.5 Q 266 48 272 64" fill="none" stroke="#7f6dc6" stroke-width="3.4" stroke-opacity="0.45"/><path d="M351 39 Q 334 50 323 64" fill="none" stroke="#7f6dc6" stroke-width="3.4" stroke-opacity="0.45"/><path d="M355 36 Q 376 33 396 33 L396 64 L 373 64 Q 368 47 355 36 Z" fill="#7a68c2" opacity="0.6"/><path d="M396 118 Q 380 150 352 177 L 368 177 Q 388 156 396 136 Z" fill="#7b69c4" opacity="0.5"/><path d="M300 142 Q 330 150 350 177 L 338 177 Q 322 156 296 148 Z" fill="#7b69c4" opacity="0.35"/><path d="M190 142 Q 230 150 260 142 L 264 146 Q 230 156 188 147 Z" fill="#7b69c4" opacity="0.3"/></g><linearGradient id="cp" x1="0" y1="0" x2="1" y2="1"><stop offset="0" stop-color="#4c39b2"/><stop offset="1" stop-color="#6651c6"/></linearGradient><path d="M0 0 L54 0 Q 54 5 50 9.5 Q 45 13 38 15 Q 26 17.2 0 17.6 Z" fill="url(#cp)" /><path d="M0 17.6 Q 26 17.2 38 15 Q 45 13 50 9.5 Q 54 5 54 0 L 66 0 Q 61 8 54 14.8 Q 49 20.5 44 24.6 Q 36 30.5 26 32.3 Q 14 35 0 35.8 Z" fill="url(#bl)" /><path d="M0 17.6 Q 26 17.2 38 15 Q 45 13 50 9.5 Q 53 6 53.6 2" fill="none" stroke="#a9b4f4" stroke-width="0.9" opacity="0.9"/><path d="M26.5 33.4 Q 36.5 31.4 44.8 25.6 Q 50 21.4 55 15.8 Q 62.4 8.4 67.4 0" fill="none" stroke="#2c1c86" stroke-width="3.2" opacity="0.85"/><linearGradient id="bb" x1="0" y1="0" x2="1" y2="0"><stop offset="0" stop-color="#5344ca"/><stop offset="1" stop-color="#3a31c2"/></linearGradient><path d="M0 36 Q 14 35.2 26 32.6 L 27 33.6 Q 34 44 38.5 54.6 Q 40.5 59 41.5 64 L 0 64 Z" fill="url(#bb)" /><path d="M28.4 34.6 Q 35.4 44.6 39.9 55 Q 41.9 59.4 42.9 64" fill="none" stroke="#34269a" stroke-width="2.8" opacity="0.75"/><path d="M0 141 L 4 141 Q 2 160 0 177 Z" fill="#2a2fb8" opacity="0.6"/></svg>
<svg style="left:228.2px;top:200.6px" width="10.4" height="8" viewBox="0 0 10.4 8" ><rect x="0.4" y="0.4" width="9.4" height="7" fill="#fdfdfe" stroke="#7a8290" stroke-width="0.8"/><rect x="0.4" y="0.4" width="9.4" height="1.6" fill="#c24b72"/><line x1="1.8" y1="3.6" x2="3.8" y2="3.6" stroke="#6d7584" stroke-width="0.8"/><line x1="1.8" y1="5.4" x2="3.8" y2="5.4" stroke="#6d7584" stroke-width="0.8"/><rect x="4.8" y="3" width="2.8" height="3.2" fill="#7f8fb4"/></svg><svg style="left:570.2px;top:206.8px" width="3" height="1.4" viewBox="0 0 3 1.4" ><rect x="0" y="0" width="2.8" height="1.2" fill="#5a6a86"/></svg><svg style="left:589px;top:204.8px" width="5.4" height="3.4" viewBox="0 0 5.4 3.4" ><rect x="0.4" y="0.6" width="4.4" height="2.2" fill="#f4f8fe" stroke="#5a6a86" stroke-width="0.8"/><line x1="0.2" y1="0.5" x2="5" y2="0.5" stroke="#4a5a76" stroke-width="0.9"/></svg><svg style="left:609.6px;top:203.8px" width="5" height="4.4" viewBox="0 0 5 4.4" ><path d="M0.4 0.4 L4.2 4 M4.2 0.4 L0.4 4" fill="none" stroke="#5a6a86" stroke-width="1.1" /></svg>
<div class="a" id="dlgb"></div>
<div class="btn" style="left:229px;top:273px;width:187px;height:28px"></div>
<div class="btn" style="left:229px;top:301.6px;width:187px;height:28.2px"></div>
<div class="btn" style="left:229px;top:330.8px;width:187px;height:20.3px"></div>
<div class="btn" style="left:229px;top:358px;width:373px;height:22px"></div>
<div class="a" id="wbox"></div>
<svg style="left:228.6px;top:272.6px" width="188" height="29" viewBox="0 0 188 29" ><rect x="0.5" y="0.5" width="186.5" height="27.5" fill="none" stroke="#d4632a" stroke-width="0.9" stroke-dasharray="2 2"/><rect x="0.5" y="0.5" width="186.5" height="27.5" fill="none" stroke="#35b7e6" stroke-width="0.9" stroke-dasharray="2 2" stroke-dashoffset="2"/></svg>
<div class="a" id="status"></div>
<div class="a" id="stl"></div>
<div class="a" id="stsep"></div>
<div class="a" id="wsb"></div>
<div class="a" id="task"></div>
<div class="tb" style="left:102px;width:96px"></div>
<div class="tb tb2" style="left:201.5px;width:97px"></div>
<svg style="left:6.4px;top:479px" width="25" height="25" viewBox="0 0 25 25" ><defs><radialGradient id="sg" cx="50%" cy="35%" r="70%"><stop offset="0" stop-color="#6cc0f0"/><stop offset="0.5" stop-color="#1f78bc"/><stop offset="1" stop-color="#083562"/></radialGradient></defs><circle cx="12.5" cy="12.2" r="12.2" fill="#0a1a2c"/><circle cx="12.5" cy="12.2" r="11.4" fill="url(#sg)" stroke="#7fc0ea" stroke-width="0.7" stroke-opacity="0.7"/><path d="M6.4 5.6 Q 9.6 3.6 13.4 6.0 L 12.6 11.0 Q 9.2 9.0 5.6 11.2 Z" fill="#e8581c" /><path d="M14.2 6.6 Q 17.2 8.4 20.2 6.4 L 19.4 11.6 Q 16.4 13.4 13.4 11.8 Z" fill="#7fbd2e" /><path d="M5.4 12.0 Q 8.8 10.2 12.2 12.2 L 11.4 17.4 Q 8.0 15.6 4.6 17.4 Z" fill="#2f96e6" /><path d="M13.0 12.8 Q 16.0 14.6 19.0 12.6 L 18.2 17.8 Q 15.2 19.6 12.2 18.0 Z" fill="#f6c428" /></svg>
<svg style="left:41px;top:487.8px" width="10.4" height="8.6" viewBox="0 0 10.4 8.6" ><rect x="0.4" y="0.4" width="9.6" height="7.8" fill="#2f6fd0" stroke="#b9cdea" stroke-width="0.8"/><rect x="1" y="1" width="8.4" height="3" fill="#5a96e8"/><rect x="1" y="6.2" width="8.4" height="1.4" fill="#2a3a5a"/></svg>
<svg style="left:55px;top:487.8px" width="10.4" height="8.6" viewBox="0 0 10.4 8.6" ><rect x="0.4" y="0.4" width="9.6" height="7.8" fill="#15349a" stroke="#c3d2ee" stroke-width="0.8"/><rect x="2" y="2" width="4.2" height="2.6" fill="#eef2fa"/><rect x="3.4" y="3.6" width="4.6" height="2.8" fill="#dfe6f4" stroke="#8fa0c0" stroke-width="0.4"/></svg>
<svg style="left:70px;top:485.4px" width="10" height="10" viewBox="0 0 10 10" ><circle cx="5" cy="5" r="4.7" fill="#e8791c"/><circle cx="5.4" cy="4.4" r="2.7" fill="#2b55c6"/><path d="M0.6 4 Q 1.4 8.6 5.4 9.4 Q 8.8 9.2 9.6 5.6 Q 8 8 5.2 7.6 Q 2.4 7 2.6 3.6 Z" fill="#f4a01e" /><path d="M2 1.6 Q 3.4 0.4 5.4 0.4 Q 3.6 1.4 3.2 3 Z" fill="#f6b52a" /></svg>
<svg style="left:107px;top:486.6px" width="9.4" height="9" viewBox="0 0 9.4 9" ><rect x="0.4" y="0.6" width="8.6" height="8" fill="#e9eef8" stroke="#6f86c0" stroke-width="0.6"/><rect x="0" y="2" width="5.6" height="5.4" fill="#2b57b8" stroke="#15307a" stroke-width="0.4"/><text x="2.8" y="6.5" font-family="Liberation Sans" font-weight="bold" font-size="4.6" fill="#fff" text-anchor="middle">W</text></svg>
<svg style="left:207px;top:486.4px" width="10.4" height="9.8" viewBox="0 0 10.4 9.8" ><rect x="0.4" y="0.4" width="9.6" height="9" fill="#c23a74" stroke="#e9a6c4" stroke-width="0.6" rx="1.2"/><circle cx="3.6" cy="4" r="1.9" fill="none" stroke="#fff" stroke-width="1.1"/><line x1="4.8" y1="5.2" x2="8.6" y2="8.2" stroke="#fff" stroke-width="1.1"/><line x1="7.2" y1="7.2" x2="8.2" y2="6.2" stroke="#fff" stroke-width="0.8"/></svg>
<svg style="left:730px;top:487.6px" width="5" height="5.6" viewBox="0 0 5 5.6" ><path d="M4.4 0.4 L1 2.8 L4.4 5.2" fill="none" stroke="#ffffff" stroke-width="1.2" /></svg>
<svg style="left:738.8px;top:485px" width="10.4" height="10.4" viewBox="0 0 10.4 10.4" ><path d="M0.6 4.4 L5 1.4 L9.8 4.4 L9.8 10 L0.6 10 Z" fill="#d8201c" /><path d="M5 0 L5 3 M5 0.2 L8 1 L5 1.8" fill="none" stroke="#e8302a" stroke-width="0.8" /><path d="M3.4 5.4 L7 8.6 M7 5.4 L3.4 8.6" fill="none" stroke="#fff" stroke-width="1.2" /></svg>
<svg style="left:750.2px;top:484.2px" width="10.4" height="10.4" viewBox="0 0 10.4 10.4" ><circle cx="5.2" cy="5.2" r="4.9" fill="#ee7a14"/><circle cx="5.2" cy="5.2" r="4.9" fill="none" stroke="#f7a34a" stroke-width="0.6"/><path d="M3 6.8 Q 2.6 3 5.4 3 Q 7.8 3.2 7.4 6.8 L 6 6.8 Q 6.4 4.4 5.2 4.4 Q 4 4.6 4.4 6.8 Z" fill="#fff" /></svg>
<svg style="left:762.2px;top:485px" width="9.4" height="10" viewBox="0 0 9.4 10" ><circle cx="4.4" cy="6" r="3.4" fill="#e8c81a" stroke="#b01818" stroke-width="0.9"/><circle cx="4.4" cy="6" r="1.5" fill="#1838c8"/><line x1="1" y1="1.4" x2="8.6" y2="1.4" stroke="#fff" stroke-width="0.9"/><line x1="2" y1="0.4" x2="2" y2="2.4" stroke="#fff" stroke-width="0.7"/><line x1="5" y1="0.4" x2="5" y2="2.4" stroke="#fff" stroke-width="0.7"/><line x1="8" y1="1" x2="8" y2="6" stroke="#fff" stroke-width="0.8"/></svg>
<div class="a" style="left:732px;top:470px;width:11.5px;height:11px;border:1px solid #e9b54a;border-radius:1.5px;background:linear-gradient(#fde6ae,#fbd27a 50%,#f9c45c)"></div>
<div class="a" style="left:743.5px;top:470px;width:0.8px;height:11px;background:#a8c4ea"></div>
<div class="a" style="left:755px;top:470px;width:0.8px;height:11px;background:#a8c4ea"></div>
<div class="a" style="left:766.5px;top:470px;width:0.8px;height:11px;background:#a8c4ea"></div>
<div class="a" style="left:778px;top:470px;width:0.8px;height:11px;background:#a8c4ea"></div>
<div class="a" style="left:789.5px;top:470px;width:0.8px;height:11px;background:#a8c4ea"></div>
<svg style="left:733.8px;top:472.2px" width="8" height="7" viewBox="0 0 8 7" ><rect x="0.4" y="0.4" width="7.2" height="5.8" fill="#fbfbfb" stroke="#555c66" stroke-width="0.8"/><rect x="0.4" y="0.4" width="7.2" height="1.6" fill="#555c66"/><line x1="1.6" y1="3.6" x2="3.4" y2="3.6" stroke="#555c66" stroke-width="0.7"/><rect x="4.2" y="3" width="2.2" height="1.6" fill="#8a93a8"/></svg>
<svg style="left:745.4px;top:472.2px" width="8" height="7" viewBox="0 0 8 7" ><rect x="0.4" y="0.4" width="7.2" height="5.8" fill="#fbfbfb" stroke="#555c66" stroke-width="0.8"/><rect x="0.4" y="0.4" width="7.2" height="1.8" fill="#555c66"/><line x1="2.8" y1="2" x2="2.8" y2="6" stroke="#555c66" stroke-width="0.6"/><line x1="5.2" y1="2" x2="5.2" y2="6" stroke="#555c66" stroke-width="0.6"/><line x1="0.6" y1="4" x2="7.4" y2="4" stroke="#555c66" stroke-width="0.6"/></svg>
<svg style="left:757px;top:472.2px" width="8" height="7" viewBox="0 0 8 7" ><rect x="2.4" y="0.4" width="4.6" height="2.6" fill="#e9edf4" stroke="#555c66" stroke-width="0.7"/><rect x="0.4" y="3.2" width="4" height="3" fill="#e9edf4" stroke="#555c66" stroke-width="0.7"/><rect x="4.6" y="3.2" width="3" height="3" fill="#cfd6e2" stroke="#555c66" stroke-width="0.7"/></svg>
<svg style="left:768.6px;top:472.2px" width="8" height="7" viewBox="0 0 8 7" ><rect x="2.2" y="0.4" width="4.4" height="4.2" fill="#f4f6fa" stroke="#555c66" stroke-width="0.7"/><rect x="0.4" y="2.4" width="3.6" height="3.8" fill="#cfd6e2" stroke="#555c66" stroke-width="0.7"/><line x1="4.6" y1="5.8" x2="7.6" y2="5.8" stroke="#555c66" stroke-width="0.8"/></svg>
<svg style="left:780.2px;top:472.2px" width="8" height="7" viewBox="0 0 8 7" ><rect x="1.4" y="0.4" width="5.4" height="6" fill="#f4f6fa" stroke="#555c66" stroke-width="0.7"/><line x1="0.2" y1="1.6" x2="3" y2="1.6" stroke="#555c66" stroke-width="0.8"/><line x1="2.4" y1="3.4" x2="5.8" y2="3.4" stroke="#555c66" stroke-width="0.7"/><line x1="0.2" y1="5" x2="3" y2="5" stroke="#555c66" stroke-width="0.8"/></svg>
<svg style="left:791.4px;top:472.2px" width="8" height="7" viewBox="0 0 8 7" ><path d="M0.6 0.8 L6.4 5.6 M6.4 0.8 L3 3.6" fill="none" stroke="#555c66" stroke-width="1" /><path d="M0.4 6.4 L3.6 6.4 L0.4 3.6 Z" fill="#3c66c0" /><line x1="5" y1="6.2" x2="7.6" y2="6.2" stroke="#555c66" stroke-width="0.8"/></svg>

<!-- text -->
<span class="t" id="t0" style="left:373px;top:3.95px;font-size:7.5px;line-height:9.5px;color:#ffffff;transform:scaleX(1.013);">Microsoft Access</span>
<span class="t" id="t1" style="left:38px;top:19.95px;font-size:7.5px;line-height:9.5px;color:#15428b;transform:scaleX(0.930);">Accueil</span>
<span class="t" id="t2" style="left:78px;top:19.95px;font-size:7.5px;line-height:9.5px;color:#15428b;transform:scaleX(0.906);">Créer</span>
<span class="t" id="t3" style="left:113.75px;top:19.95px;font-size:7.5px;line-height:9.5px;color:#15428b;transform:scaleX(0.936);">Données externes</span>
<span class="t" id="t4" style="left:189.25px;top:19.95px;font-size:7.5px;line-height:9.5px;color:#15428b;transform:scaleX(0.961);">Outils de base de données</span>
<span class="t" id="t5" style="left:10px;top:57.85px;font-size:7.3px;line-height:9.3px;color:#15428b;transform:scaleX(0.931);">Table</span>
<span class="t" id="t6" style="left:35.75px;top:57.85px;font-size:7.3px;line-height:9.3px;color:#15428b;transform:scaleX(0.997);">Modèles</span>
<span class="t" id="t7" style="left:33.25px;top:65.95px;font-size:7.3px;line-height:9.3px;color:#15428b;transform:scaleX(0.970);">de tables</span>
<span class="t" id="t8" style="left:82px;top:57.85px;font-size:7.3px;line-height:9.3px;color:#15428b;transform:scaleX(0.905);">Listes</span>
<span class="t" id="t9" style="left:70.75px;top:65.95px;font-size:7.3px;line-height:9.3px;color:#15428b;transform:scaleX(0.949);">SharePoint</span>
<span class="t" id="t10" style="left:113.75px;top:57.85px;font-size:7.3px;line-height:9.3px;color:#15428b;transform:scaleX(0.978);">Création</span>
<span class="t" id="t11" style="left:115px;top:65.95px;font-size:7.3px;line-height:9.3px;color:#15428b;transform:scaleX(0.943);">de table</span>
<span class="t" id="t12" style="left:151.25px;top:57.85px;font-size:7.3px;line-height:9.3px;color:#15428b;transform:scaleX(0.968);">Formulaire</span>
<span class="t" id="t13" style="left:198.5px;top:57.85px;font-size:7.3px;line-height:9.3px;color:#15428b;transform:scaleX(1.004);">Formulaire</span>
<span class="t" id="t14" style="left:189px;top:65.95px;font-size:7.3px;line-height:9.3px;color:#15428b;transform:scaleX(1.020);">double affichage</span>
<span class="t" id="t15" style="left:247px;top:57.85px;font-size:7.3px;line-height:9.3px;color:#15428b;transform:scaleX(0.933);">Plusieurs</span>
<span class="t" id="t16" style="left:247.5px;top:65.95px;font-size:7.3px;line-height:9.3px;color:#15428b;transform:scaleX(0.929);">éléments</span>
<span class="t" id="t17" style="left:291.25px;top:36.50px;font-size:7px;line-height:9px;color:#15428b;transform:scaleX(1.028);">Graphique croisé dynamique</span>
<span class="t" id="t18" style="left:291.25px;top:50.00px;font-size:7px;line-height:9px;color:#15428b;transform:scaleX(1.010);">Formulaire vierge</span>
<span class="t" id="t19" style="left:291.25px;top:63.70px;font-size:7px;line-height:9px;color:#15428b;transform:scaleX(1.022);">Plus de formulaires</span>
<span class="t" id="t20" style="left:388px;top:57.85px;font-size:7.3px;line-height:9.3px;color:#15428b;transform:scaleX(0.981);">Création de</span>
<span class="t" id="t21" style="left:389.5px;top:65.95px;font-size:7.3px;line-height:9.3px;color:#15428b;transform:scaleX(1.032);">formulaire</span>
<span class="t" id="t22" style="left:440px;top:57.85px;font-size:7.3px;line-height:9.3px;color:#15428b;transform:scaleX(0.963);">État</span>
<span class="t" id="t23" style="left:473.75px;top:36.50px;font-size:7px;line-height:9px;color:#15428b;transform:scaleX(1.044);">Étiquettes</span>
<span class="t" id="t24" style="left:473.75px;top:50.00px;font-size:7px;line-height:9px;color:#15428b;transform:scaleX(1.009);">État vide</span>
<span class="t" id="t25" style="left:473.75px;top:63.70px;font-size:7px;line-height:9px;color:#15428b;transform:scaleX(1.011);">Assistant État</span>
<span class="t" id="t26" style="left:520.75px;top:57.85px;font-size:7.3px;line-height:9.3px;color:#15428b;transform:scaleX(0.997);">Création</span>
<span class="t" id="t27" style="left:525px;top:65.95px;font-size:7.3px;line-height:9.3px;color:#15428b;transform:scaleX(1.106);">d'état</span>
<span class="t" id="t28" style="left:558px;top:57.85px;font-size:7.3px;line-height:9.3px;color:#15428b;transform:scaleX(0.979);">Assistant</span>
<span class="t" id="t29" style="left:559.25px;top:65.95px;font-size:7.3px;line-height:9.3px;color:#15428b;transform:scaleX(0.978);">Requête</span>
<span class="t" id="t30" style="left:594px;top:57.85px;font-size:7.3px;line-height:9.3px;color:#15428b;transform:scaleX(0.988);">Création</span>
<span class="t" id="t31" style="left:591px;top:65.95px;font-size:7.3px;line-height:9.3px;color:#15428b;transform:scaleX(0.974);">de requête</span>
<span class="t" id="t32" style="left:630px;top:57.85px;font-size:7.3px;line-height:9.3px;color:#15428b;transform:scaleX(0.949);">Macro</span>
<span class="t" id="t33" style="left:64.25px;top:76.50px;font-size:7px;line-height:9px;color:#5a7fbb;transform:scaleX(0.964);">Tables</span>
<span class="t" id="t34" style="left:270px;top:76.50px;font-size:7px;line-height:9px;color:#5a7fbb;">Formulaires</span>
<span class="t" id="t35" style="left:484.5px;top:76.50px;font-size:7px;line-height:9px;color:#5a7fbb;transform:scaleX(0.972);">États</span>
<span class="t" id="t36" style="left:596.25px;top:76.50px;font-size:7px;line-height:9px;color:#5a7fbb;transform:scaleX(1.046);">Autre</span>
<span class="t" id="t37" style="left:6.5px;top:92.90px;font-size:8.0px;line-height:10.0px;color:#2a4f96;transform:scaleX(1.019);-webkit-text-stroke:0;">Tous les objets Access</span>
<span class="t" id="t38" style="left:26.2px;top:103.90px;font-size:7px;line-height:9px;color:#000000;transform:scaleX(0.916);-webkit-text-stroke:0.1px #222;">CONTRAT</span>
<span class="t" id="t39" style="left:26.2px;top:118.90px;font-size:7px;line-height:9px;color:#000000;transform:scaleX(0.920);-webkit-text-stroke:0.1px #222;">IMPORTATEUR</span>
<span class="t" id="t40" style="left:26.2px;top:133.90px;font-size:7px;line-height:9px;color:#000000;transform:scaleX(0.930);-webkit-text-stroke:0.1px #222;">MARCHANDISE</span>
<span class="t" id="t41" style="left:26.2px;top:148.90px;font-size:7px;line-height:9px;color:#000000;transform:scaleX(0.909);-webkit-text-stroke:0.1px #222;">QUITTANCE</span>
<span class="t" id="t42" style="left:26.2px;top:176.10px;font-size:7px;line-height:9px;color:#000000;transform:scaleX(0.881);-webkit-text-stroke:0.1px #222;">REC_CONTRAT</span>
<span class="t" id="t43" style="left:26.2px;top:202.90px;font-size:7px;line-height:9px;color:#000000;transform:scaleX(0.890);-webkit-text-stroke:0.1px #222;">AGENCE</span>
<span class="t" id="t44" style="left:26.2px;top:217.90px;font-size:7px;line-height:9px;color:#000000;transform:scaleX(0.938);-webkit-text-stroke:0.1px #222;">AJOUTIMPO</span>
<span class="t" id="t45" style="left:26.2px;top:232.90px;font-size:7px;line-height:9px;color:#000000;transform:scaleX(0.916);-webkit-text-stroke:0.1px #222;">CONTRAT</span>
<span class="t" id="t46" style="left:26.2px;top:247.90px;font-size:7px;line-height:9px;color:#000000;transform:scaleX(0.891);-webkit-text-stroke:0.1px #222;">DECL_CONTRAT</span>
<span class="t" id="t47" style="left:26.2px;top:262.90px;font-size:7px;line-height:9px;color:#000000;transform:scaleX(0.891);-webkit-text-stroke:0.1px #222;">F_ACCUEIL</span>
<span class="t" id="t48" style="left:26.2px;top:277.90px;font-size:7px;line-height:9px;color:#000000;transform:scaleX(0.898);-webkit-text-stroke:0.1px #222;">GESTION</span>
<span class="t" id="t49" style="left:26.2px;top:292.90px;font-size:7px;line-height:9px;color:#000000;transform:scaleX(0.914);-webkit-text-stroke:0.1px #222;">GESTIONIMPORTATEUR</span>
<span class="t" id="t50" style="left:26.2px;top:307.90px;font-size:7px;line-height:9px;color:#000000;transform:scaleX(0.917);-webkit-text-stroke:0.1px #222;">IMPRESSION</span>
<span class="t" id="t51" style="left:26.2px;top:322.90px;font-size:7px;line-height:9px;color:#000000;transform:scaleX(0.971);-webkit-text-stroke:0.1px #222;">MARCHAND</span>
<span class="t" id="t52" style="left:26.2px;top:337.90px;font-size:7px;line-height:9px;color:#000000;transform:scaleX(0.984);-webkit-text-stroke:0.1px #222;">MENU</span>
<span class="t" id="t53" style="left:26.2px;top:352.90px;font-size:7px;line-height:9px;color:#000000;transform:scaleX(0.940);-webkit-text-stroke:0.1px #222;">MODIFIER_IMPORT</span>
<span class="t" id="t54" style="left:26.2px;top:367.90px;font-size:7px;line-height:9px;color:#000000;transform:scaleX(0.922);-webkit-text-stroke:0.1px #222;">SOUS</span>
<span class="t" id="t55" style="left:26.2px;top:382.90px;font-size:7px;line-height:9px;color:#000000;transform:scaleX(0.876);-webkit-text-stroke:0.1px #222;">SUPPRESSION</span>
<span class="t" id="t56" style="left:26.2px;top:409.90px;font-size:7px;line-height:9px;color:#000000;transform:scaleX(0.916);-webkit-text-stroke:0.1px #222;">CONTRAT</span>
<span class="t" id="t57" style="left:26.2px;top:424.90px;font-size:7px;line-height:9px;color:#000000;transform:scaleX(0.930);-webkit-text-stroke:0.1px #222;">MARCHANDISE</span>
<span class="t" id="t58" style="left:26.2px;top:439.90px;font-size:7px;line-height:9px;color:#000000;transform:scaleX(0.909);-webkit-text-stroke:0.1px #222;">QUITTANCE</span>
<span class="t" id="t59" style="left:26.2px;top:454.90px;font-size:7px;line-height:9px;color:#000000;transform:scaleX(0.881);-webkit-text-stroke:0.1px #222;">REC_CONTRAT</span>
<span class="t" id="t60" style="left:8.5px;top:163.30px;font-size:7px;line-height:9px;color:#15428b;font-weight:bold;transform:scaleX(1.047);">Requêtes</span>
<span class="t" id="t61" style="left:8.5px;top:190.10px;font-size:7px;line-height:9px;color:#15428b;font-weight:bold;transform:scaleX(1.011);">Formulaires</span>
<span class="t" id="t62" style="left:8.5px;top:397.10px;font-size:7px;line-height:9px;color:#15428b;font-weight:bold;transform:scaleX(0.993);">États</span>
<span class="t" id="t63" style="left:240.8px;top:200.30px;font-size:7px;line-height:9px;color:#555555;transform:scaleX(1.099);">gestionimportateur</span>
<span class="t" id="t64" style="left:308.6px;top:224.00px;font-size:15px;line-height:17px;color:#050308;font-weight:bold;transform:scaleX(0.928);">GESTION DES IMPORTATEURS</span>
<span class="t" id="t65" style="left:303.5px;top:279.85px;font-size:11.5px;line-height:13.5px;color:#101010;font-weight:bold;transform:scaleX(0.936);">AJOUT</span>
<span class="t" id="t66" style="left:280px;top:309.15px;font-size:11.5px;line-height:13.5px;color:#101010;font-weight:bold;transform:scaleX(1.006);">MODIFICATION</span>
<span class="t" id="t67" style="left:283.5px;top:334.55px;font-size:11.5px;line-height:13.5px;color:#101010;font-weight:bold;transform:scaleX(0.921);">SUPPRESSION</span>
<span class="t" id="t68" style="left:392.5px;top:362.75px;font-size:11.5px;line-height:13.5px;color:#101010;font-weight:bold;transform:scaleX(0.931);">RETOUR</span>
<span class="t" id="t69" style="left:5.8px;top:470.70px;font-size:7.4px;line-height:9.4px;color:#15428b;transform:scaleX(0.970);">Mode Formulaire</span>
<span class="t" id="t70" style="left:692px;top:470.80px;font-size:7.4px;line-height:9.4px;color:#15428b;transform:scaleX(0.948);">Verr. maj.</span>
<span class="t" id="t71" style="left:119.1px;top:486.45px;font-size:7.5px;line-height:9.5px;color:#ffffff;transform:scaleX(0.945);">FORMULAIRE - Micr...</span>
<span class="t" id="t72" style="left:219.7px;top:486.45px;font-size:7.5px;line-height:9.5px;color:#ffffff;transform:scaleX(0.980);">Microsoft Access - S...</span>
<span class="t" id="t73" style="left:712px;top:485.90px;font-size:7px;line-height:9px;color:#ffffff;transform:scaleX(0.813);">FR</span>
<span class="t" id="t74" style="left:776px;top:485.90px;font-size:7px;line-height:9px;color:#ffffff;transform:scaleX(0.941);">08:25</span>
<span class="t" id="t75" style="left:91px;top:483.10px;font-size:7px;line-height:9px;color:#ffffff;transform:scaleX(1.024);">»</span>
</body></html>
